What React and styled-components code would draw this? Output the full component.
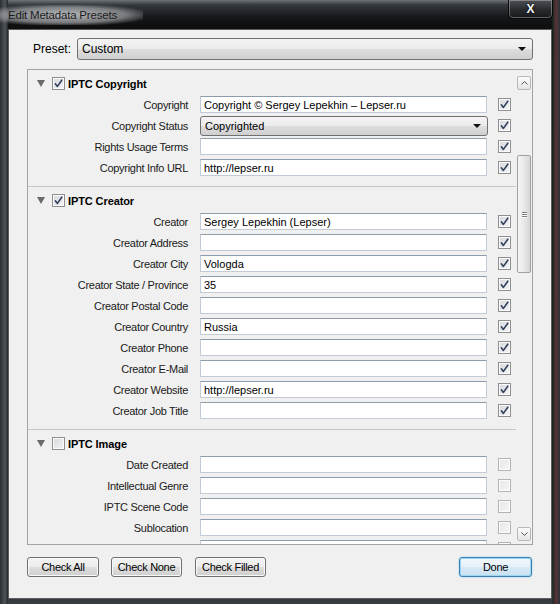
import React from 'react';
import styled, { createGlobalStyle } from 'styled-components';

const GlobalStyle = createGlobalStyle`
  html, body { margin: 0; padding: 0; background: #0d0e10; }
  body { font-family: "Liberation Sans", Arial, sans-serif; }
  * { box-sizing: border-box; }
`;

const Frame = styled.div`
  width: 560px;
  height: 604px;
  display: flex;
  flex-direction: column;
  padding: 0 8px 5px 8px;
  overflow: hidden;
  background:
    linear-gradient(90deg, #2b2f33 0px, #50555b 5px, #24272a 8px, transparent 8px, transparent 552px, #1f2b22 553px, #5a3236 556px, #27343a 560px),
    linear-gradient(180deg, #6d7379 0px, #34383c 5px, #141618 18px, #0c0d0e 29px, #1d1f22 560px, #3a3c44 604px);
`;

const TitleBar = styled.div`
  height: 29px;
  display: flex;
  align-items: flex-start;
`;

const Title = styled.span`
  margin: 5px 0 0 -8px;
  padding: 0 26px 0 8px;
  height: 20px;
  line-height: 20px;
  font-size: 11.5px;
  letter-spacing: -0.2px;
  color: #1c1c1c;
  background: radial-gradient(ellipse at 45% 50%, rgba(200, 202, 205, 0.9) 0%, rgba(160, 162, 165, 0.7) 55%, rgba(120, 120, 120, 0) 80%);
`;

const CloseButton = styled.div`
  margin-left: auto;
  margin-right: -1px;
  width: 45px;
  height: 19px;
  display: flex;
  align-items: center;
  justify-content: center;
  border: 1px solid #0a0a0a;
  border-top: none;
  border-radius: 0 0 5px 5px;
  box-shadow: inset 0 0 0 1px rgba(255, 255, 255, 0.3);
  background: linear-gradient(180deg, #4e5257 0%, #2a2d30 50%, #17191b 100%);
  color: #f4f4f4;
  font-weight: bold;
  font-size: 12px;
  text-shadow: 0 0 3px #000;
`;

const Client = styled.div`
  flex: 1;
  display: flex;
  flex-direction: column;
  background: #f0f0f0;
  border: 1px solid #5c5c5c;
  padding: 8px 18px 0 18px;
`;

const PresetRow = styled.div`
  height: 22px;
  display: flex;
  align-items: center;
  gap: 6px;
  padding-left: 6px;
`;

const PresetLabel = styled.span`
  font-size: 12px;
  color: #000;
`;

const DropButton = styled.div`
  flex: ${(p) => (p.$fill ? 1 : 'none')};
  width: ${(p) => (p.$fill ? 'auto' : '288px')};
  height: ${(p) => p.$h || 20}px;
  display: flex;
  align-items: center;
  justify-content: space-between;
  padding: 0 6px 0 4px;
  border: 1px solid #707070;
  border-radius: 3px;
  background: linear-gradient(180deg, #f4f4f4 0%, #ebebeb 48%, #dddddd 52%, #cfcfcf 100%);
  font-size: ${(p) => (p.$fill ? 12 : 11)}px;
  color: #000;
`;

const Arrow = styled.span`
  width: 0;
  height: 0;
  border-left: 4px solid transparent;
  border-right: 4px solid transparent;
  border-top: 4px solid #111;
`;

const Panel = styled.div`
  margin-top: 9px;
  height: 476px;
  display: flex;
  border: 1px solid #a3a3a3;
  background: #f0f0f0;
`;

const Content = styled.div`
  width: 488px;
  overflow: hidden;
`;

const Section = styled.div`
  padding: 3px 0 8px 0;
  border-bottom: 1px solid #c6c6c6;
`;

const Header = styled.div`
  height: 21px;
  display: flex;
  align-items: center;
`;

const Disclosure = styled.span`
  margin-left: 9px;
  width: 0;
  height: 0;
  border-left: 4px solid transparent;
  border-right: 4px solid transparent;
  border-top: 7px solid #6a6a6a;
`;

const HeaderTitle = styled.span`
  margin-left: 3px;
  font-size: 11px;
  font-weight: bold;
  letter-spacing: -0.1px;
  color: #000;
`;

const Row = styled.div`
  height: 21px;
  display: flex;
  align-items: center;
`;

const Label = styled.span`
  width: 160px;
  margin-right: 12px;
  text-align: right;
  font-size: 11px;
  letter-spacing: -0.3px;
  color: #1a1a1a;
  white-space: nowrap;
`;

const TextBox = styled.div`
  width: 287px;
  height: 17px;
  padding: 0 3px;
  display: flex;
  align-items: center;
  background: #fff;
  border: 1px solid #c3ccd6;
  border-top-color: #8e9bab;
  font-size: 11px;
  color: #000;
  white-space: nowrap;
  overflow: hidden;
`;

const Box = styled.span`
  flex: none;
  width: 13px;
  height: 13px;
  margin-left: ${(p) => p.$ml || 0}px;
  display: flex;
  align-items: center;
  justify-content: center;
  border: 1px solid ${(p) => (p.$dim ? '#b4b4b4' : '#8e8f8f')};
  background: ${(p) =>
    p.$dim
      ? 'linear-gradient(135deg, #e6e6e6 0%, #f6f6f6 100%)'
      : 'linear-gradient(135deg, #d6d8db 0%, #f4f5f6 100%)'};
  box-shadow: inset 0 0 0 1px #fbfbfb;
`;

const ScrollBar = styled.div`
  flex: 1;
  display: flex;
  flex-direction: column;
  padding: 6px 1px 3px 1px;
`;

const ScrollButton = styled.div`
  width: 14px;
  height: 14px;
  display: flex;
  align-items: center;
  justify-content: center;
  border: 1px solid #b8b8b8;
  border-radius: 2px;
  background: linear-gradient(180deg, #fbfbfb 0%, #e4e4e4 100%);
`;

const Track = styled.div`
  flex: 1;
`;

const Thumb = styled.div`
  margin-top: 65px;
  width: 14px;
  height: 118px;
  display: flex;
  flex-direction: column;
  align-items: center;
  justify-content: center;
  gap: 1px;
  border: 1px solid #a0a0a0;
  border-radius: 2px;
  background: linear-gradient(90deg, #f6f6f6 0%, #e8e8e8 50%, #d6d6d6 100%);
`;

const Grip = styled.span`
  width: 5px;
  height: 1px;
  background: #7d7d7d;
  box-shadow: 0 1px 0 #fff;
`;

const ButtonBar = styled.div`
  margin-top: 12px;
  display: flex;
  align-items: center;
`;

const Button = styled.div`
  flex: none;
  width: ${(p) => p.$w}px;
  height: 20px;
  margin-left: ${(p) => p.$ml || 0}px;
  display: flex;
  align-items: center;
  justify-content: center;
  border: 1px solid ${(p) => (p.$primary ? '#3c7fb1' : '#707070')};
  border-radius: 3px;
  background: ${(p) =>
    p.$primary
      ? 'linear-gradient(180deg, #f2f8fc 0%, #e5f1f9 48%, #d6e9f5 52%, #c9e1f1 100%)'
      : 'linear-gradient(180deg, #f4f4f4 0%, #ebebeb 48%, #dddddd 52%, #cfcfcf 100%)'};
  box-shadow: ${(p) => (p.$primary ? 'inset 0 0 0 1px #9bd5f2, 0 0 2px #8fcbee' : 'inset 0 0 0 1px #fafafa')};
  font-size: 11px;
  letter-spacing: -0.3px;
  white-space: nowrap;
  color: #000;
`;

function Check({ checked, dim, ml }) {
  return (
    <Box $dim={dim} $ml={ml}>
      {checked && (
        <svg width="11" height="11" viewBox="0 0 11 11">
          <path d="M2.3 5.8 L4.4 8.4 L8.8 2.2" fill="none" stroke="#33405e" strokeWidth="1.6" strokeLinecap="round" strokeLinejoin="round" />
        </svg>
      )}
    </Box>
  );
}

const sections = [
  {
    title: 'IPTC Copyright',
    checked: true,
    rows: [
      { label: 'Copyright', value: 'Copyright © Sergey Lepekhin – Lepser.ru', on: true },
      { label: 'Copyright Status', value: 'Copyrighted', select: true, on: true },
      { label: 'Rights Usage Terms', value: '', on: true },
      { label: 'Copyright Info URL', value: 'http://lepser.ru', on: true },
    ],
  },
  {
    title: 'IPTC Creator',
    checked: true,
    rows: [
      { label: 'Creator', value: 'Sergey Lepekhin (Lepser)', on: true },
      { label: 'Creator Address', value: '', on: true },
      { label: 'Creator City', value: 'Vologda', on: true },
      { label: 'Creator State / Province', value: '35', on: true },
      { label: 'Creator Postal Code', value: '', on: true },
      { label: 'Creator Country', value: 'Russia', on: true },
      { label: 'Creator Phone', value: '', on: true },
      { label: 'Creator E-Mail', value: '', on: true },
      { label: 'Creator Website', value: 'http://lepser.ru', on: true },
      { label: 'Creator Job Title', value: '', on: true },
    ],
  },
  {
    title: 'IPTC Image',
    checked: false,
    rows: [
      { label: 'Date Created', value: '' },
      { label: 'Intellectual Genre', value: '' },
      { label: 'IPTC Scene Code', value: '' },
      { label: 'Sublocation', value: '' },
      { label: '', value: '' },
    ],
  },
];

export default function App() {
  return (
    <>
      <GlobalStyle />
      <Frame>
        <TitleBar>
          <Title>Edit Metadata Presets</Title>
          <CloseButton>X</CloseButton>
        </TitleBar>
        <Client>
          <PresetRow>
            <PresetLabel>Preset:</PresetLabel>
            <DropButton $fill $h={22}>
              <span>Custom</span>
              <Arrow />
            </DropButton>
          </PresetRow>
          <Panel>
            <Content>
              {sections.map((s) => (
                <Section key={s.title}>
                  <Header>
                    <Disclosure />
                    <Check checked={s.checked} ml={7} />
                    <HeaderTitle>{s.title}</HeaderTitle>
                  </Header>
                  {s.rows.map((r, i) => (
                    <Row key={i}>
                      <Label>{r.label}</Label>
                      {r.select ? (
                        <DropButton>
                          <span>{r.value}</span>
                          <Arrow />
                        </DropButton>
                      ) : (
                        <TextBox>{r.value}</TextBox>
                      )}
                      <Check checked={r.on} dim={!r.on} ml={r.select ? 10 : 11} />
                    </Row>
                  ))}
                </Section>
              ))}
            </Content>
            <ScrollBar>
              <ScrollButton>
                <svg width="7" height="4" viewBox="0 0 7 4">
                  <path d="M0.5 3.5 L3.5 0.5 L6.5 3.5" fill="none" stroke="#555" strokeWidth="1" />
                </svg>
              </ScrollButton>
              <Track>
                <Thumb>
                  <Grip />
                  <Grip />
                  <Grip />
                </Thumb>
              </Track>
              <ScrollButton>
                <svg width="7" height="4" viewBox="0 0 7 4">
                  <path d="M0.5 0.5 L3.5 3.5 L6.5 0.5" fill="none" stroke="#555" strokeWidth="1" />
                </svg>
              </ScrollButton>
            </ScrollBar>
          </Panel>
          <ButtonBar>
            <Button $w={72}>Check All</Button>
            <Button $w={71} $ml={12}>Check None</Button>
            <Button $w={71} $ml={13}>Check Filled</Button>
            <Button $w={73} $ml={193} $primary>Done</Button>
          </ButtonBar>
        </Client>
      </Frame>
    </>
  );
}
